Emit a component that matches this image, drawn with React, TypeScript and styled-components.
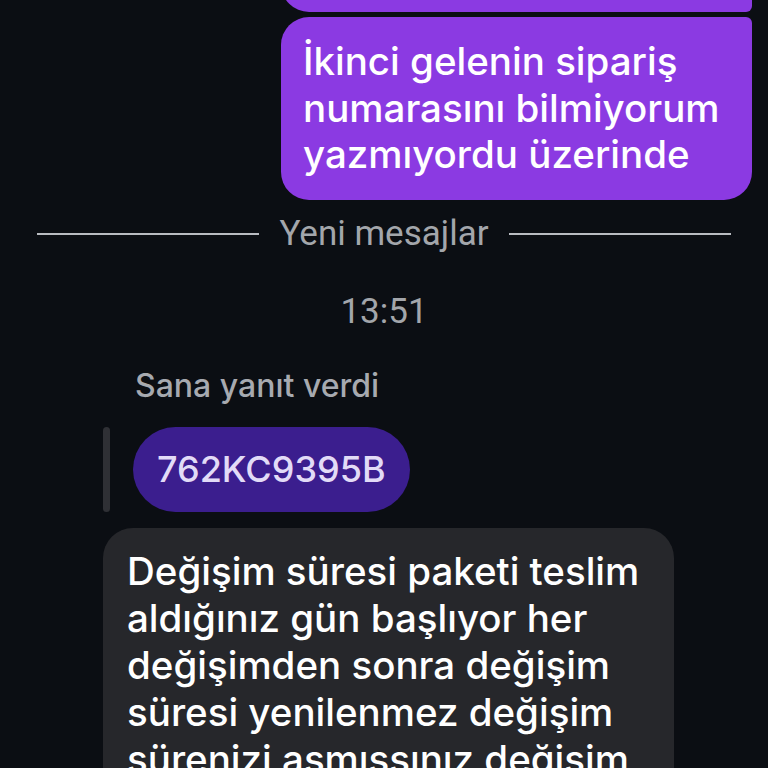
import React from "react";
import styled, { createGlobalStyle } from "styled-components";

const Global = createGlobalStyle`
  html, body {
    margin: 0;
    padding: 0;
    background: #0b0e13;
    height: 768px;
    overflow: hidden;
  }
  #root { height: 768px; overflow: hidden; }
`;

const Screen = styled.div`
  width: 768px;
  height: 768px;
  overflow: hidden;
  background: #0b0e13;
  display: flex;
  flex-direction: column;
  font-family: Inter, "Noto Sans", sans-serif;
  -webkit-font-smoothing: antialiased;
`;

const OutRow = styled.div<{ $first?: boolean }>`
  display: flex;
  justify-content: flex-end;
  padding-right: 16px;
  margin-top: ${(p) => (p.$first ? "-48px" : "5px")};
`;

const OutBubble = styled.div<{ $pos: "top" | "bottom" }>`
  background: #8b3ae2;
  color: #ffffff;
  width: 471px;
  box-sizing: border-box;
  padding: ${(p) => (p.$pos === "top" ? "0 22px" : "21px 22px 22px 22px")};
  height: ${(p) => (p.$pos === "top" ? "60px" : "auto")};
  font-size: 38.5px;
  font-weight: 500;
  line-height: 46.5px;
  border-radius: ${(p) => (p.$pos === "top" ? "28px 28px 6px 28px" : "28px 6px 28px 28px")};
`;

const Divider = styled.div`
  display: flex;
  align-items: center;
  gap: 20px;
  padding: 0 37px;
  margin-top: 16px;
  height: 36px;
`;

const Rule = styled.div`
  flex: 1;
  height: 2px;
  background: #b9bcc1;
`;

const DividerLabel = styled.span`
  font-family: Roboto, "Noto Sans", sans-serif;
  font-size: 35px;
  line-height: 36px;
  color: #a3a6ab;
`;

const Time = styled.div`
  text-align: center;
  font-family: Roboto, "Noto Sans", sans-serif;
  font-size: 35px;
  color: #a3a6ab;
  margin-top: 42px;
  line-height: 36px;
`;

const ReplyLabel = styled.div`
  font-size: 32px;
  font-weight: 500;
  color: #a7aab0;
  padding-left: 135px;
  margin-top: 38px;
  line-height: 36px;
`;

const ReplyRow = styled.div`
  display: flex;
  align-items: stretch;
  gap: 23px;
  padding-left: 103px;
  margin-top: 23px;
`;

const ReplyBar = styled.div`
  width: 7px;
  border-radius: 4px;
  background: #2f3035;
`;

const ReplyBubble = styled.div`
  background: #3b1e8e;
  color: #e2dbf7;
  height: 85px;
  display: flex;
  align-items: center;
  padding: 0 24px;
  border-radius: 43px;
  font-size: 36px;
  font-weight: 500;
`;

const InRow = styled.div`
  display: flex;
  padding-left: 103px;
  margin-top: 16px;
`;

const InBubble = styled.div`
  background: #26272b;
  color: #ffffff;
  width: 571px;
  box-sizing: border-box;
  padding: 20px 20px 20px 24px;
  font-size: 38.5px;
  font-weight: 500;
  line-height: 47px;
  border-radius: 30px;
`;

export default function App() {
  return (
    <>
      <Global />
      <Screen>
        <OutRow $first>
          <OutBubble $pos="top" />
        </OutRow>
        <OutRow>
          <OutBubble $pos="bottom">
            İkinci gelenin sipariş numarasını bilmiyorum yazmıyordu üzerinde
          </OutBubble>
        </OutRow>
        <Divider>
          <Rule />
          <DividerLabel>Yeni mesajlar</DividerLabel>
          <Rule />
        </Divider>
        <Time>13:51</Time>
        <ReplyLabel>Sana yanıt verdi</ReplyLabel>
        <ReplyRow>
          <ReplyBar />
          <ReplyBubble>762KC9395B</ReplyBubble>
        </ReplyRow>
        <InRow>
          <InBubble>
            Değişim süresi paketi teslim aldığınız gün başlıyor her değişimden sonra değişim süresi yenilenmez değişim sürenizi aşmışsınız değişim yapamıyoruz
          </InBubble>
        </InRow>
      </Screen>
    </>
  );
}
